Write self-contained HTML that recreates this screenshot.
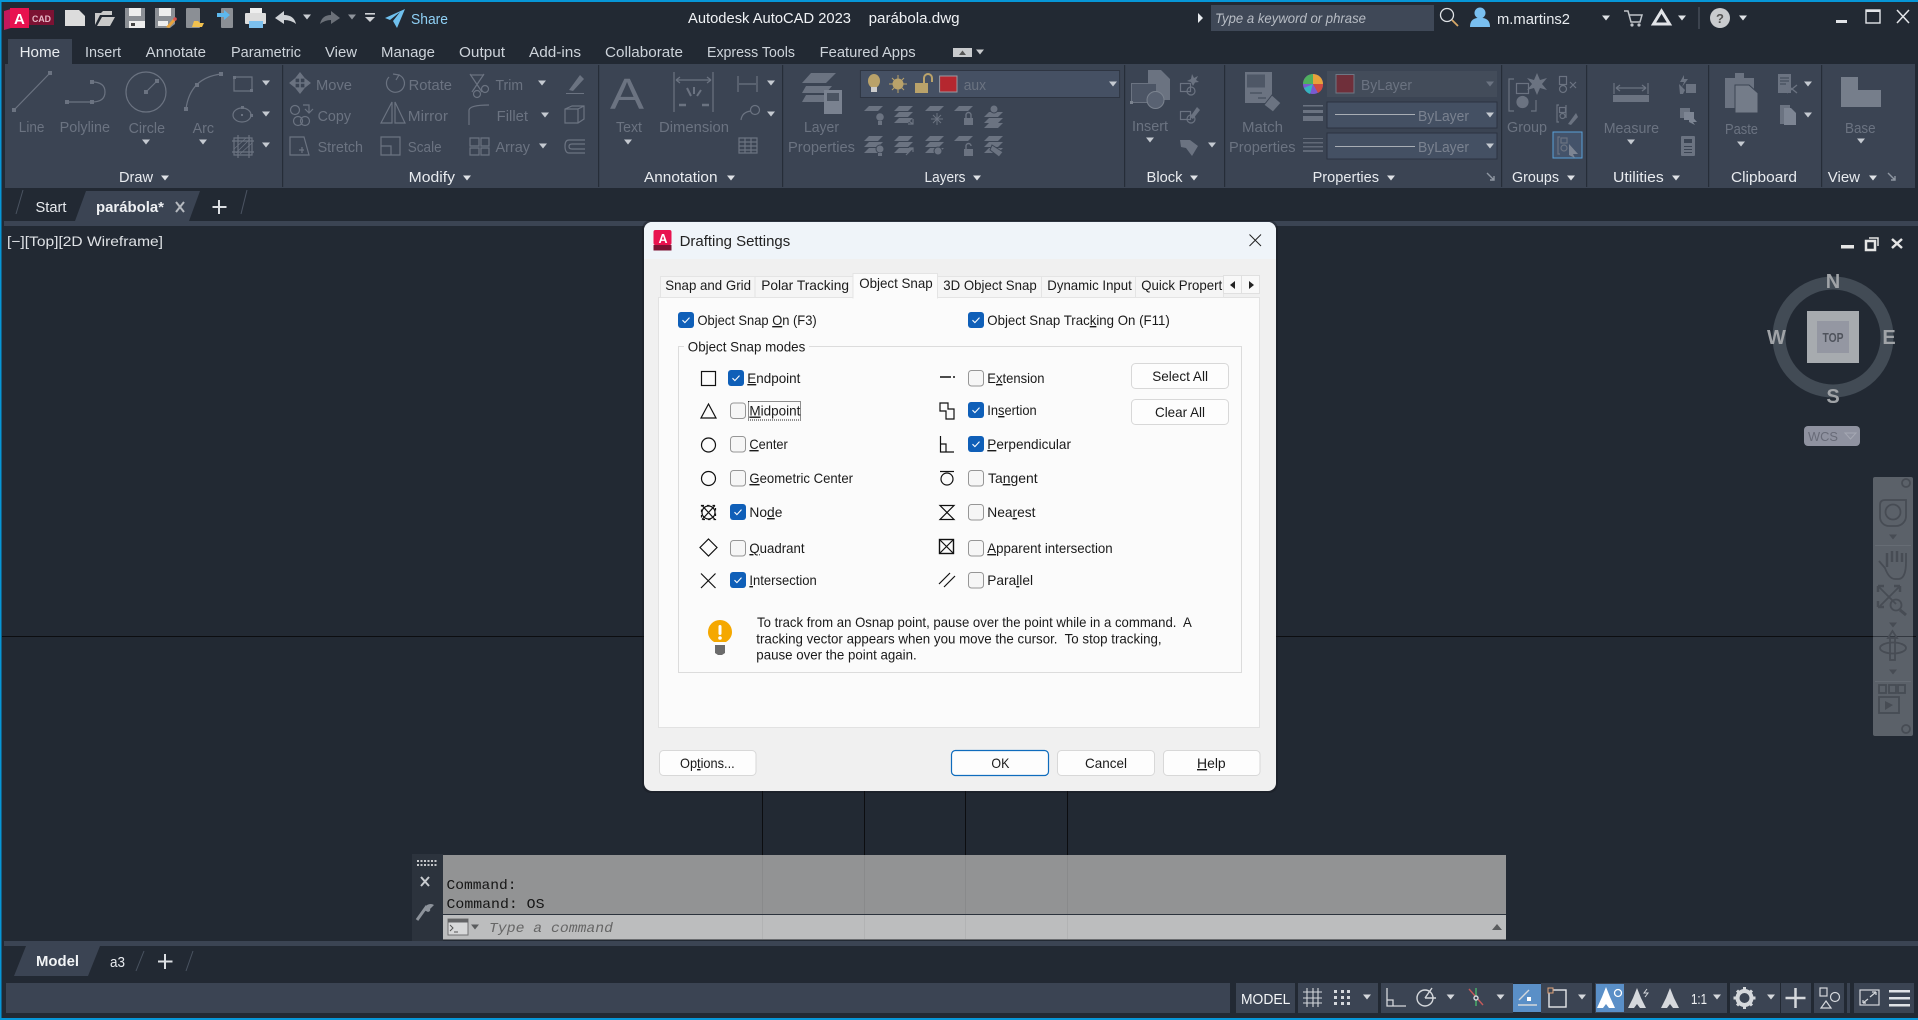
<!DOCTYPE html>
<html lang="en"><head><meta charset="utf-8"><title>Autodesk AutoCAD 2023</title>
<style>
html,body{margin:0;padding:0;background:#222933;overflow:hidden}
svg{display:block;position:absolute;left:0;top:0}
text{font-family:"Liberation Sans",sans-serif;font-size:14.5px;white-space:pre}
.w{fill:#e8ebef}.t{fill:#cdd3da}.d{fill:#6b7381}.k{fill:#1a1a1a;font-size:14px}
.m{font-family:"Liberation Mono",monospace;fill:#151515;font-size:14px}
.u{text-decoration:underline}
.i{fill:none;stroke:#6b7381;stroke-width:1.2}
.f{fill:#6b7381}
.c{fill:none;stroke:#111;stroke-width:1.2}
.s{fill:none;stroke:#d5d8dc;stroke-width:1.4}
</style></head><body>
<svg width="1918" height="1020" viewBox="0 0 1918 1020" xmlns="http://www.w3.org/2000/svg">
<defs>
<path id="dd" d="M-4-2.5H4L0 2.5Z"/>
<path id="lp" d="M5 0H19L14 5H0Z"/>
<g id="on"><rect width="16" height="16" rx="3" fill="#0f5fb8"/><path d="M4.5 8.2l2.4 2.4 4.6-5" fill="none" stroke="#fff" stroke-width="1.1"/></g>
<rect id="off" x=".5" y=".5" width="15" height="15.500" rx="3" fill="#f6f6f6" stroke="#969696"/>
</defs>

<rect width="1918" height="1020" fill="#222933"/>
<rect width="1918" height="2" fill="#0696d7"/><rect y="1018" width="1918" height="2" fill="#0696d7"/><rect width="1.500" height="1020" fill="#0696d7"/>

<!-- QAT -->
<path d="M4 11L11 9V28L4 30Z" fill="#c2185b"/><rect x="10" y="8" width="19" height="20" fill="#e8124f"/>
<rect x="29" y="10" width="25" height="15" fill="#7c1233"/>
<text x="14" y="24" style="font-size:15px;font-weight:bold" fill="#fff">A</text>
<text x="32" y="22" style="font-size:9.500px;font-weight:bold" fill="#e6b8c6" textLength="19" lengthAdjust="spacingAndGlyphs">CAD</text>
<path d="M65 10H79L85 16V26H65Z" fill="#dcdcdc"/>
<path d="M95 25V13H101L103 11H112V15H100L95 25ZM97 26L102 17H115L110 26Z" fill="#c9c9c9"/>
<path d="M125 8H145V28H125Z" fill="#8b8f95"/><rect x="129" y="8" width="12" height="8" fill="#eee"/><rect x="129" y="21" width="16" height="7" fill="#eee"/><rect x="131" y="23" width="4" height="3" fill="#444"/>
<path d="M155 8H175V24L170 28H155Z" fill="#8b8f95"/><rect x="159" y="8" width="12" height="8" fill="#eee"/><rect x="158" y="21" width="10" height="5" fill="#eee"/><path d="M166 27L174 18L176 20L169 28Z" fill="#e8a33d"/><circle cx="175" cy="19" r="1.800" fill="#d9534f"/>
<rect x="186" y="8" width="14" height="20" rx="1" fill="#8b8f95"/><path d="M194 21H198L200 23H204L202 27H192Z" fill="#f2c14e"/>
<rect x="221" y="8" width="12" height="20" rx="1" fill="#8b8f95"/><path d="M217 13H224V10L230 15L224 20V17H217Z" fill="#5db8ee"/>
<path d="M250 8H262V14H250Z" fill="#eee"/><rect x="245" y="13" width="21" height="11" rx="1" fill="#dcdcdc"/><rect x="249" y="21" width="14" height="7" fill="#7cc0ee"/>
<path d="M275 18L284 11V15Q294 15 296 24Q291 20 284 20V24Z" fill="#cfd2d6"/>
<use href="#dd" x="307" y="17" fill="#c9cdd2"/>
<path d="M340 18L331 11V15Q322 15 320 24Q325 20 331 20V24Z" fill="#6b7078"/>
<use href="#dd" x="352" y="17" fill="#8e939b"/>
<rect x="365" y="13" width="10" height="1.600" fill="#cfd2d6"/><path d="M365 17H375L370 22Z" fill="#cfd2d6"/>
<path d="M385 18L405 9L397 28L393 21L400 12L390 20Z" fill="#6fc0ee"/>
<text x="411" y="24" fill="#8fd0f5" textLength="37" lengthAdjust="spacingAndGlyphs">Share</text>

<!-- title -->
<text x="688" y="23" style="fill:#f0f2f5" textLength="163" lengthAdjust="spacingAndGlyphs">Autodesk AutoCAD 2023</text>
<text x="868.600" y="23" style="fill:#f0f2f5" textLength="91" lengthAdjust="spacingAndGlyphs">parábola.dwg</text>
<path d="M1198 13L1203 18L1198 23Z" fill="#e8ebef"/>
<rect x="1211" y="5" width="223" height="26" fill="#3f4857"/>
<text x="1215" y="23" style="font-style:italic;font-size:14px" fill="#b8bdc5" textLength="151" lengthAdjust="spacingAndGlyphs">Type a keyword or phrase</text>
<circle cx="1447" cy="15" r="6.500" fill="none" stroke="#dfe2e6" stroke-width="1.300"/><path d="M1452 20L1458 26" stroke="#d8a868" stroke-width="1.800"/>
<circle cx="1480" cy="13" r="5.500" fill="#79bff0"/><path d="M1470 27Q1470 19 1477 18H1483Q1490 19 1490 27Z" fill="#79bff0"/>
<text x="1497" y="24" class="w" textLength="73" lengthAdjust="spacingAndGlyphs">m.martins2</text>
<use href="#dd" x="1606" y="18" fill="#dfe2e6"/>
<path d="M1624 11H1628L1631 22H1640L1642 15H1629" fill="none" stroke="#bfc3c8" stroke-width="1.500"/><circle cx="1632" cy="25" r="1.600" fill="#bfc3c8"/><circle cx="1639" cy="25" r="1.600" fill="#bfc3c8"/>
<path d="M1661.500 11L1653.500 24H1669.500Z" fill="none" stroke="#e2e4e8" stroke-width="3"/>
<use href="#dd" x="1682" y="18" fill="#dfe2e6"/>
<rect x="1698.500" y="7" width="1" height="22" fill="#555d69"/>
<circle cx="1720" cy="18" r="10" fill="#c9cbce"/><text x="1716" y="23" style="font-size:13px;font-weight:bold" fill="#555">?</text>
<use href="#dd" x="1743" y="18" fill="#dfe2e6"/>
<rect x="1836" y="20" width="11" height="3" fill="#e2e4e8"/>
<rect x="1866" y="10" width="14" height="13" fill="none" stroke="#e2e4e8" stroke-width="1.400"/><rect x="1865.500" y="9.500" width="15" height="2.500" fill="#e2e4e8"/>
<path d="M1897 10L1909 23M1909 10L1897 23" stroke="#e2e4e8" stroke-width="1.500"/>

<!-- ribbon tabs -->
<rect x="8" y="39" width="64" height="25" fill="#3b4453"/>
<text x="19.600" y="57" class="w" textLength="40.500" lengthAdjust="spacingAndGlyphs">Home</text>
<text x="85" y="57" class="t" textLength="36" lengthAdjust="spacingAndGlyphs">Insert</text>
<text x="145.700" y="57" class="t" textLength="60.300" lengthAdjust="spacingAndGlyphs">Annotate</text>
<text x="231" y="57" class="t" textLength="70" lengthAdjust="spacingAndGlyphs">Parametric</text>
<text x="325" y="57" class="t" textLength="32" lengthAdjust="spacingAndGlyphs">View</text>
<text x="381" y="57" class="t" textLength="54" lengthAdjust="spacingAndGlyphs">Manage</text>
<text x="459" y="57" class="t" textLength="46" lengthAdjust="spacingAndGlyphs">Output</text>
<text x="529" y="57" class="t" textLength="52" lengthAdjust="spacingAndGlyphs">Add-ins</text>
<text x="605" y="57" class="t" textLength="78" lengthAdjust="spacingAndGlyphs">Collaborate</text>
<text x="707" y="57" class="t" textLength="88" lengthAdjust="spacingAndGlyphs">Express Tools</text>
<text x="819.600" y="57" class="t" textLength="96" lengthAdjust="spacingAndGlyphs">Featured Apps</text>
<rect x="953" y="48" width="19" height="9" fill="#c8cacd"/><path d="M959 55H966L962.500 50.500Z" fill="#555"/>
<use href="#dd" x="980" y="52" fill="#c8cacd"/>

<!-- ribbon panel -->
<rect x="5" y="64" width="1910" height="124" fill="#3b4453"/>
<g fill="#262d38">
<rect x="282" y="65" width="1.200" height="122"/><rect x="598" y="65" width="1.200" height="122"/><rect x="782" y="65" width="1.200" height="122"/><rect x="1124" y="65" width="1.200" height="122"/><rect x="1224" y="65" width="1.200" height="122"/><rect x="1501" y="65" width="1.200" height="122"/><rect x="1586" y="65" width="1.200" height="122"/><rect x="1708" y="65" width="1.200" height="122"/><rect x="1821" y="65" width="1.200" height="122"/>
</g>

<!-- panel titles -->
<text x="119" y="182" class="w" textLength="34" lengthAdjust="spacingAndGlyphs">Draw</text><use href="#dd" x="165" y="178" fill="#dfe2e6"/>
<text x="408.600" y="182" class="w" textLength="46.400" lengthAdjust="spacingAndGlyphs">Modify</text><use href="#dd" x="467" y="178" fill="#dfe2e6"/>
<text x="644" y="182" class="w" textLength="73.500" lengthAdjust="spacingAndGlyphs">Annotation</text><use href="#dd" x="731" y="178" fill="#dfe2e6"/>
<text x="924.500" y="182" class="w" textLength="41" lengthAdjust="spacingAndGlyphs">Layers</text><use href="#dd" x="977" y="178" fill="#dfe2e6"/>
<text x="1146.500" y="182" class="w" textLength="36" lengthAdjust="spacingAndGlyphs">Block</text><use href="#dd" x="1194" y="178" fill="#dfe2e6"/>
<text x="1312.600" y="182" class="w" textLength="66.400" lengthAdjust="spacingAndGlyphs">Properties</text><use href="#dd" x="1391" y="178" fill="#dfe2e6"/>
<text x="1512" y="182" class="w" textLength="47" lengthAdjust="spacingAndGlyphs">Groups</text><use href="#dd" x="1571" y="178" fill="#dfe2e6"/>
<text x="1613" y="182" class="w" textLength="50.700" lengthAdjust="spacingAndGlyphs">Utilities</text><use href="#dd" x="1676" y="178" fill="#dfe2e6"/>
<text x="1731" y="182" class="w" textLength="66" lengthAdjust="spacingAndGlyphs">Clipboard</text>
<text x="1827.800" y="182" class="w" textLength="32.200" lengthAdjust="spacingAndGlyphs">View</text><use href="#dd" x="1873" y="178" fill="#dfe2e6"/>
<path d="M1487 173L1494 180M1494 176V180H1490" fill="none" stroke="#8f97a2" stroke-width="1.400"/>
<path d="M1888 173L1895 180M1895 176V180H1891" fill="none" stroke="#8f97a2" stroke-width="1.400"/>

<!-- ribbon tool labels -->
<text x="18.800" y="132" class="d" textLength="25.700" lengthAdjust="spacingAndGlyphs">Line</text>
<text x="59.600" y="132" class="d" textLength="50.400" lengthAdjust="spacingAndGlyphs">Polyline</text>
<text x="128.600" y="133" class="d" textLength="36.400" lengthAdjust="spacingAndGlyphs">Circle</text>
<text x="192.600" y="133" class="d" textLength="21.400" lengthAdjust="spacingAndGlyphs">Arc</text>
<text x="316" y="90" class="d" textLength="36" lengthAdjust="spacingAndGlyphs">Move</text>
<text x="408.600" y="90" class="d" textLength="43.400" lengthAdjust="spacingAndGlyphs">Rotate</text>
<text x="495.500" y="90" class="d" textLength="27.500" lengthAdjust="spacingAndGlyphs">Trim</text>
<text x="317.600" y="121" class="d" textLength="33.400" lengthAdjust="spacingAndGlyphs">Copy</text>
<text x="407.800" y="121" class="d" textLength="40.200" lengthAdjust="spacingAndGlyphs">Mirror</text>
<text x="496.700" y="121" class="d" textLength="31.300" lengthAdjust="spacingAndGlyphs">Fillet</text>
<text x="317.600" y="152" class="d" textLength="45.400" lengthAdjust="spacingAndGlyphs">Stretch</text>
<text x="407.800" y="152" class="d" textLength="33.800" lengthAdjust="spacingAndGlyphs">Scale</text>
<text x="495.500" y="152" class="d" textLength="34.500" lengthAdjust="spacingAndGlyphs">Array</text>
<text x="616" y="132" class="d" textLength="26" lengthAdjust="spacingAndGlyphs">Text</text>
<text x="659" y="132" class="d" textLength="70" lengthAdjust="spacingAndGlyphs">Dimension</text>
<text x="804" y="132" class="d" textLength="35" lengthAdjust="spacingAndGlyphs">Layer</text>
<text x="788" y="152" class="d" textLength="67" lengthAdjust="spacingAndGlyphs">Properties</text>
<text x="1132" y="131" class="d" textLength="36" lengthAdjust="spacingAndGlyphs">Insert</text>
<text x="1242" y="132" class="d" textLength="41" lengthAdjust="spacingAndGlyphs">Match</text>
<text x="1229" y="152" class="d" textLength="66.500" lengthAdjust="spacingAndGlyphs">Properties</text>
<text x="1507" y="132" class="d" textLength="40" lengthAdjust="spacingAndGlyphs">Group</text>
<text x="1603.700" y="133" class="d" textLength="55.300" lengthAdjust="spacingAndGlyphs">Measure</text>
<text x="1725" y="134" class="d" textLength="33" lengthAdjust="spacingAndGlyphs">Paste</text>
<text x="1845" y="133" class="d" textLength="30.600" lengthAdjust="spacingAndGlyphs">Base</text>

<!-- Draw icons -->
<g class="i">
<path d="M14 110L50 73"/><path d="M67 102H92Q105 102 105 92Q105 82 92 82"/>
<circle cx="146" cy="92" r="20"/><path d="M146 92L157 81"/>
<path d="M186 109Q190 78 221 74"/>
<path d="M234 77H252V91H234Z"/><ellipse cx="242" cy="115" rx="9" ry="7"/>
<path d="M234 138H252V155H234ZM238 135V158M249 135V158M232 141H254M232 152H254"/>
<path d="M236 153L250 139M240 154L252 143M234 149L246 138" stroke-width=".8"/>
</g>
<g class="f">
<rect x="48" y="71" width="4" height="4"/><rect x="12" y="108" width="4" height="4"/><rect x="65" y="100" width="4" height="4"/><rect x="90" y="100" width="4" height="4"/><rect x="90" y="80" width="4" height="4"/>
<rect x="144" y="90" width="4" height="4"/><rect x="155" y="79" width="4" height="4"/><rect x="184" y="107" width="4" height="4"/><rect x="195" y="83" width="4" height="4"/><rect x="219" y="72" width="4" height="4"/>
<rect x="233" y="76" width="3" height="3"/><rect x="250" y="89" width="3" height="3"/><rect x="241" y="106" width="3" height="3"/><rect x="241" y="114" width="2" height="2"/><rect x="250" y="114" width="3" height="3"/>
</g>
<g fill="#c5cad1">
<use href="#dd" x="146" y="142"/><use href="#dd" x="203" y="142"/><use href="#dd" x="266" y="83"/><use href="#dd" x="266" y="114"/><use href="#dd" x="266" y="145"/>
<use href="#dd" x="542" y="83"/><use href="#dd" x="545" y="115"/><use href="#dd" x="543" y="146"/>
<use href="#dd" x="628" y="142"/><use href="#dd" x="771" y="83"/><use href="#dd" x="771" y="114"/>
<use href="#dd" x="1150" y="140"/><use href="#dd" x="1212" y="145"/><use href="#dd" x="1631" y="142"/><use href="#dd" x="1741" y="144"/><use href="#dd" x="1861" y="141"/><use href="#dd" x="1808" y="84"/><use href="#dd" x="1808" y="115"/>
</g>

<!-- Modify icons -->
<g class="i">
<path d="M300 76V90M292 83H308" stroke-width="1.600"/>
<path d="M296 78L300 73L304 78ZM296 88L300 93L304 88ZM295 79L290 83L295 87ZM305 79L310 83L305 87Z" fill="#6b7381"/>
<circle cx="295" cy="110" r="4.500"/><path d="M303 105H309V112M305 109L309 113L313 109"/><circle cx="298" cy="121" r="4.500"/><circle cx="305" cy="121" r="4.500"/>
<path d="M290 137H304L309 155H290ZM299 150H304M302 147V153"/>
<path d="M389 77A9 9 0 1 0 399 75M393 74L399 75L396 80"/>
<path d="M381 123L392 102V123ZM395 102L405 123H395Z"/>
<path d="M381 137H400V155H381ZM381 146H391V155"/>
<path d="M470 74L482 92M484 74L472 92"/><circle cx="477" cy="94" r="3.500"/><circle cx="485" cy="89" r="3.500"/><path d="M470 75H484"/>
<path d="M469 125V110Q470 105 489 105"/>
<path d="M470 138H479V146H470ZM481 138H489V146H481ZM470 148H479V155H470ZM481 148H489V155H481Z"/>
<path d="M565 109L572 106H584V119L578 123H565ZM565 109H578V123M578 109L584 106"/>
<path d="M585 140H569Q565 140 565 146Q565 153 569 153H585M585 144H572Q569 144 569 146.500Q569 149 572 149H585"/>
</g>
<path d="M569 90L580 75L584 79L573 91Z" fill="#6b7381"/><rect x="566" y="93" width="18" height="1" fill="#6b7381"/>

<!-- Annotation icons -->
<text x="610" y="109" style="font-size:44px" fill="#6b7381" textLength="34" lengthAdjust="spacingAndGlyphs">A</text>
<g class="i">
<path d="M674 72V112M713 72V112M676 80H711M676 80L680 77M676 80L680 83M711 80L707 77M711 80L707 83"/>
<path d="M691 96L687 88M694 94V87M697 96L701 90" stroke-width="2"/><path d="M679 105H686M702 105H709" stroke-width="2.500"/>
<path d="M738 76V92M757 76V92M739 84H756"/>
<circle cx="755" cy="110" r="4.500"/><path d="M751 111Q742 112 741 120"/>
<path d="M739 138H757V153H739ZM739 142H757M739 146H757M739 150H757M745 138V153M751 138V153"/>
</g>

<!-- Layers -->
<g class="f">
<path d="M811 73H836L826 83H802ZM806 86H832L826 93H802ZM806 95H824V102H802Z"/>
<rect x="824" y="90" width="18" height="24" fill="#7a8290"/><rect x="827" y="93" width="12" height="8" fill="#4b5462"/>
</g>
<rect x="860.400" y="70.500" width="259.200" height="27" fill="#455063" stroke="#2e3542"/>
<ellipse cx="874" cy="81" rx="6" ry="7" fill="#b9a26a"/><rect x="871" y="87" width="6" height="5" fill="#ccc"/>
<circle cx="898" cy="84" r="5.500" fill="#b9a26a"/><path d="M898 75V93M889 84H907M892 78L904 90M904 78L892 90" stroke="#b9a26a"/>
<rect x="915" y="83" width="13" height="10" fill="#b9a26a"/><path d="M924 83V78A4 4 0 0 1 932 78V82" fill="none" stroke="#b9a26a" stroke-width="2"/>
<rect x="939.600" y="76" width="17.400" height="16" fill="#b5272f" stroke="#9a9aa0"/>
<use href="#dd" x="1113" y="84" fill="#c5cad1"/>
<text x="963.700" y="90" class="d" textLength="22.300" lengthAdjust="spacingAndGlyphs">aux</text>
<g class="f">
<use href="#lp" x="864" y="106"/><circle cx="880" cy="117" r="3.800"/><rect x="878" y="121" width="4" height="4"/>
<use href="#lp" x="894" y="106"/><use href="#lp" x="894" y="112"/><use href="#lp" x="894" y="118"/>
<use href="#lp" x="925" y="106"/><path d="M937 113V125M931 119H943M933 115L941 123M941 115L933 123" stroke="#6b7381" fill="none"/>
<use href="#lp" x="954" y="106"/><rect x="964" y="118" width="9" height="7"/><path d="M966 118V115A2.500 2.500 0 0 1 971 115V118" fill="none" stroke="#6b7381" stroke-width="1.400"/>
<use href="#lp" x="984" y="112"/><use href="#lp" x="984" y="118"/><use href="#lp" x="984" y="124" transform="translate(0 -1)"/><circle cx="994" cy="109" r="4" stroke="#3b4453"/>
<use href="#lp" x="864" y="136"/><use href="#lp" x="864" y="142"/><use href="#lp" x="864" y="148"/><circle cx="880" cy="149" r="4" stroke="#3b4453"/><rect x="878" y="153" width="4" height="3"/>
<use href="#lp" x="894" y="136"/><use href="#lp" x="894" y="142"/><use href="#lp" x="894" y="148"/>
<use href="#lp" x="925" y="136"/><use href="#lp" x="925" y="142"/><use href="#lp" x="925" y="148"/><circle cx="938" cy="151" r="4" stroke="#3b4453"/>
<use href="#lp" x="954" y="136"/><rect x="964" y="149" width="9" height="7"/><path d="M966 149V146A2.500 2.500 0 0 1 971 146" fill="none" stroke="#6b7381" stroke-width="1.400"/>
<use href="#lp" x="984" y="136"/><use href="#lp" x="984" y="142"/><use href="#lp" x="984" y="148"/><path d="M992 145L1003 152L999 157L990 150Z" stroke="#3b4453"/>
</g>
<path d="M906 119L913 124M913 119V124H908M906 155L913 148M913 152V148H909" fill="none" stroke="#6b7381" stroke-width="1.200"/>

<!-- Block -->
<path d="M1148 70H1161L1170 79V100H1148Z" fill="#6b7381"/>
<rect x="1131.500" y="83.500" width="25" height="19" fill="#4c5565" stroke="#6b7381"/>
<circle cx="1155.500" cy="100" r="8.500" fill="#596272" stroke="#7b838f"/>
<rect x="1130" y="101" width="3" height="3" fill="#7b838f"/>
<g class="i"><rect x="1180.500" y="83.500" width="10" height="8"/><circle cx="1191" cy="91" r="4"/><rect x="1180.500" y="111.500" width="10" height="8"/><circle cx="1191" cy="119" r="4"/></g>
<path d="M1192 74L1194 78L1198 76L1196 80L1199 82L1195 82.500L1193 86L1191 82L1187 81L1191 79Z" fill="#6b7381"/>
<path d="M1190 117L1197 107L1200 110L1193 119Z" fill="#6b7381"/>
<path d="M1180 140H1190L1198 146L1192 156L1186 148L1181 147Z" fill="#6b7381"/>
<path d="M1245 72H1272V103H1245Z" fill="#6b7381"/><rect x="1247.500" y="75" width="17" height="12" fill="#4e5766" stroke="#4e5766"/>
<path d="M1250 93H1262M1258 98H1266" stroke="#3b4453"/>
<path d="M1264 105L1272 95L1281 103L1273 112Z" fill="#6b7381" stroke="#3b4453"/>

<!-- Properties -->
<circle cx="1313" cy="84" r="10" fill="#7a5bd0"/>
<path d="M1313 84L1313 74A10 10 0 0 1 1323 84Z" fill="#e8a23a"/><path d="M1313 84L1323 84A10 10 0 0 1 1318 93Z" fill="#cf4a43"/><path d="M1313 84L1304 88A10 10 0 0 0 1310 94Z" fill="#36b3c0"/><path d="M1313 84L1313 74A10 10 0 0 0 1303 84Z" fill="#4fb05e"/>
<rect x="1327" y="71" width="170" height="26" fill="#434c5a"/><rect x="1336" y="74.500" width="18" height="18.500" fill="#6f2f3a" stroke="#6f7784"/>
<use href="#dd" x="1490" y="84" fill="#6b7381"/>
<rect x="1327" y="102" width="170" height="26" fill="#445063" stroke="#2b3240"/><rect x="1327" y="133" width="170" height="26" fill="#445063" stroke="#2b3240"/>
<rect x="1335" y="114" width="80" height="1" fill="#a9aeb5"/><rect x="1335" y="146" width="80" height="1" fill="#a9aeb5"/>
<use href="#dd" x="1490" y="115" fill="#c5cad1"/><use href="#dd" x="1490" y="146" fill="#c5cad1"/>
<text x="1361" y="90" class="d" textLength="51" lengthAdjust="spacingAndGlyphs">ByLayer</text>
<text x="1418" y="121" class="d" textLength="51" style="fill:#7a8290" lengthAdjust="spacingAndGlyphs">ByLayer</text>
<text x="1418" y="152" class="d" textLength="51" style="fill:#7a8290" lengthAdjust="spacingAndGlyphs">ByLayer</text>
<g class="f"><rect x="1303" y="105" width="20" height="1.500"/><rect x="1303" y="110" width="20" height="3"/><rect x="1303" y="116" width="20" height="5"/>
<rect x="1303" y="138" width="20" height="1" opacity=".8"/><rect x="1303" y="142" width="20" height="1.500" opacity=".8"/><rect x="1303" y="146" width="20" height="1.500" opacity=".8"/><rect x="1303" y="150" width="20" height="2" opacity=".8"/></g>

<!-- Groups -->
<g class="i"><path d="M1514 79H1509V111H1514M1536 100V111H1531"/><rect x="1516.500" y="83.500" width="12" height="10"/><circle cx="1522.500" cy="102" r="5.500" class="f"/>
<rect x="1559.500" y="76.500" width="7" height="8"/><circle cx="1563" cy="89" r="3.500"/><path d="M1570 82L1576 88M1576 82L1570 88"/>
<path d="M1559 105H1557V122H1559M1566 105V118"/><rect x="1559.500" y="107.500" width="6" height="5"/><circle cx="1562.500" cy="116" r="2.500"/></g>
<path d="M1537 73L1540 80L1547 78L1542 84L1547 90L1540 88L1537 95L1534 88L1527 90L1532 84L1527 78L1534 80Z" fill="#6b7381"/>
<path d="M1568 124L1576 113L1578 117L1571 125Z" fill="#6b7381"/>
<rect x="1553" y="132" width="29" height="26" fill="#44536a" stroke="#58a0d8"/>
<g class="i"><path d="M1560 137H1558V154H1560"/><rect x="1561" y="138" width="6" height="5"/><circle cx="1564" cy="148" r="3"/></g>
<path d="M1569 144L1578 154H1573L1575 158L1569 155Z" fill="#7d8593"/>

<!-- Utilities -->
<g class="i"><path d="M1614 83V94M1648 83V94M1616 88H1646M1616 88L1620 85M1616 88L1620 91M1646 88L1642 85M1646 88L1642 91"/></g>
<rect x="1613" y="95" width="36" height="7" fill="#6b7381"/>
<g class="f"><path d="M1684 75L1680 82H1684L1682 87L1688 79H1684Z"/><path d="M1679 84L1685 90L1683 94L1680 94Z"/><rect x="1686" y="84" width="10" height="9"/>
<rect x="1680" y="108" width="10" height="10"/><rect x="1684" y="112" width="10" height="8" fill="#7d8593"/><path d="M1689 113L1697 122H1693L1695 125L1689 122Z" fill="#7d8593"/>
<rect x="1681" y="136" width="14" height="20" rx="1"/><rect x="1684" y="139" width="8" height="4" fill="#3b4453"/><rect x="1684" y="146" width="8" height="1" fill="#3b4453"/><rect x="1684" y="149" width="8" height="1" fill="#3b4453"/><rect x="1684" y="152" width="8" height="1" fill="#3b4453"/>
<path d="M1725 78H1735V73H1744V78H1754V89H1745V108H1725Z"/><path d="M1735 85H1749L1758 93V113H1735Z" fill="#747c89" stroke="#3b4453"/>
<rect x="1778" y="74" width="13" height="19"/>
<path d="M1780 105H1790V124H1780Z"/><path d="M1784 108H1791L1796 113V125H1784Z" fill="#7d8593"/>
<path d="M1841 77H1858V90H1881V107H1841Z" fill="#767e8b"/>
</g>
<path d="M1780 78H1789M1780 81H1789M1780 84H1786" stroke="#3b4453"/>
<path d="M1787 85L1797 93M1797 85L1787 93" stroke="#6b7381" stroke-width="1.400"/>

<!-- tabs strip -->
<path d="M16 214L23 190" stroke="#4a5361" fill="none"/>
<path d="M75 221L86 191H200L189 221Z" fill="#3b4453"/>
<text x="35.500" y="212" style="fill:#e8ebef" textLength="31" lengthAdjust="spacingAndGlyphs">Start</text>
<text x="96" y="212" style="font-weight:bold;font-size:14.500px" fill="#eef0f3" textLength="68" lengthAdjust="spacingAndGlyphs">parábola*</text>
<path d="M176 202L184 212M184 202L176 212" stroke="#b5b9bf" stroke-width="2"/>
<path d="M212.500 207H226.500M219 200V214" stroke="#dcdfe3" stroke-width="2"/>
<path d="M241 214L247 190" stroke="#4a5361"/>
<rect x="4" y="221" width="1914" height="5" fill="#3b4453"/>

<!-- canvas -->
<text x="7" y="246" fill="#dfe2e6" style="font-size:14px" textLength="156" lengthAdjust="spacingAndGlyphs">[−][Top][2D Wireframe]</text>
<rect x="2" y="636" width="1914" height="1" fill="#0c0d10"/>
<g fill="#0c0d10"><rect x="762" y="790" width="1" height="66"/><rect x="864" y="790" width="1" height="66"/><rect x="965" y="790" width="1" height="66"/><rect x="1067" y="790" width="1" height="66"/></g>

<rect x="1841" y="245" width="13" height="3.500" fill="#e5e5e5"/>
<rect x="1866" y="241" width="9" height="9" fill="none" stroke="#e5e5e5" stroke-width="2.500"/><path d="M1869 238H1878V246" fill="none" stroke="#e5e5e5" stroke-width="1.500"/>
<path d="M1892 239L1902 248M1902 239L1892 248" stroke="#e5e5e5" stroke-width="2.500"/>

<!-- ViewCube -->
<circle cx="1833" cy="337" r="54" fill="none" stroke="#424b55" stroke-width="13"/>
<rect x="1807" y="311" width="52" height="52" fill="#a7abaf"/>
<rect x="1817" y="321" width="32" height="32" fill="#9497a2"/>
<text x="1833" y="342" text-anchor="middle" style="font-size:13px;font-weight:bold" fill="#4f535c" textLength="21" lengthAdjust="spacingAndGlyphs">TOP</text>
<g fill="#a0a3a7">
<text x="1833" y="288" text-anchor="middle" style="font-size:20px;font-weight:bold">N</text>
<text x="1833" y="403" text-anchor="middle" style="font-size:20px;font-weight:bold">S</text>
<text x="1776.500" y="344" text-anchor="middle" style="font-size:20px;font-weight:bold">W</text>
<text x="1889" y="344" text-anchor="middle" style="font-size:20px;font-weight:bold">E</text>
</g>
<rect x="1804" y="426" width="56" height="20" rx="4" fill="#8f92a0"/>
<text x="1808" y="441" style="font-size:13px" fill="#686b78" textLength="30" lengthAdjust="spacingAndGlyphs">WCS</text>
<path d="M1845 433H1856L1850.500 439Z" fill="none" stroke="#a5a8b3"/>

<!-- Nav bar -->
<rect x="1873" y="477" width="40" height="259" rx="2" fill="#5b6169"/>
<rect x="1873" y="636" width="40" height="1" fill="#333840"/>
<rect x="1875" y="545" width="36" height="1" fill="#666c74"/><rect x="1875" y="681" width="36" height="1" fill="#666c74"/>
<g fill="none" stroke="#474c54" stroke-width="1.800">
<circle cx="1906" cy="483" r="4"/><circle cx="1906" cy="729" r="4"/>
<path d="M1885 500H1906V516A10 10 0 0 1 1896 526H1889A9 9 0 0 1 1880 517V505Q1880 500 1885 500Z"/><circle cx="1893" cy="512" r="7.500"/>
<path d="M1879 561L1885 568Q1889 579 1895 579H1899Q1906 578 1906 562V553"/>
<path d="M1887 567V553M1892 562V551M1897 562V551M1902 562V553" stroke-width="2.400"/>
<path d="M1879 587L1896 604M1899 587L1880 606"/><path d="M1878 586L1884 586M1878 586V592M1900 586H1894M1900 586V592M1878 607H1884M1878 607V601" stroke-width="2.400"/>
<circle cx="1896" cy="605" r="5.500"/><path d="M1900 610L1906 615" stroke-width="3"/>
<path d="M1890 638V660H1895V638M1892.500 631L1888 638H1897Z"/><ellipse cx="1893" cy="648" rx="13" ry="5.500"/>
<rect x="1879" y="685" width="7" height="8"/><rect x="1889" y="685" width="7" height="8"/><rect x="1898" y="685" width="7" height="8"/>
<rect x="1879" y="697" width="20" height="16"/>
</g>
<path d="M1885 701L1893 705L1885 710Z" fill="#474c54"/>
<g fill="#474c54"><use href="#dd" x="1893" y="537"/><use href="#dd" x="1893" y="625"/><use href="#dd" x="1893" y="672"/></g>

<!-- Command line -->
<rect x="412" y="854" width="31" height="87" fill="#2c333d"/>
<path d="M417 861H438M417 865H438" stroke="#c5c7ca" stroke-width="2" stroke-dasharray="2 1.500"/>
<path d="M421 877L429 886M429 877L421 886" stroke="#c9ccd0" stroke-width="2"/>
<path d="M417 920L427 906" stroke="#8d939b" stroke-width="3"/><path d="M424 910L427 905Q431 903 434 905L430 909Q431 911 428 912Z" fill="#8d939b"/>
<rect x="443" y="855" width="1063" height="59" fill="#929394"/>
<rect x="443" y="914" width="1063" height="1" fill="#2c333d"/>
<rect x="443" y="915" width="1063" height="25" fill="#bcbdbe"/>
<rect x="443" y="939" width="1063" height="1" fill="#6b6d70"/>
<g fill="#898a8b"><rect x="762" y="855" width="1" height="59"/><rect x="864" y="855" width="1" height="59"/><rect x="965" y="855" width="1" height="59"/><rect x="1067" y="855" width="1" height="59"/></g>
<g fill="#b2b3b4"><rect x="762" y="915" width="1" height="24"/><rect x="864" y="915" width="1" height="24"/><rect x="965" y="915" width="1" height="24"/><rect x="1067" y="915" width="1" height="24"/></g>
<text x="446.500" y="889" class="m" textLength="70" lengthAdjust="spacingAndGlyphs">Command:</text>
<text x="446.500" y="908" class="m" textLength="98" lengthAdjust="spacingAndGlyphs">Command: OS</text>
<rect x="448" y="919" width="20" height="16" fill="#d7d8d9" stroke="#707172"/><rect x="448" y="919" width="20" height="3.500" fill="#636466"/>
<path d="M450 925L453 928L450 931M454 932H458" fill="none" stroke="#555"/>
<use href="#dd" x="475" y="927" fill="#5a5c5e"/>
<text x="489" y="932" class="m" style="font-style:italic;fill:#666" textLength="124" lengthAdjust="spacingAndGlyphs">Type a command</text>
<path d="M1492 930H1502L1497 924Z" fill="#5a5c5e"/>

<!-- Layout tabs -->
<rect x="4" y="941" width="1914" height="5" fill="#3b4453"/>
<path d="M14 976L26 946H100L88 976Z" fill="#3b4453"/>
<text x="36" y="966" style="font-weight:bold" fill="#f2f4f6" textLength="43" lengthAdjust="spacingAndGlyphs">Model</text>
<text x="110" y="967" fill="#e8ebef" textLength="15" lengthAdjust="spacingAndGlyphs">a3</text>
<path d="M136 971L144 951" stroke="#4a5361"/>
<path d="M158 961.500H172.500M165 954V969" stroke="#dcdfe3" stroke-width="2"/>
<path d="M186 971L193 951" stroke="#4a5361"/>

<!-- Status bar -->
<g fill="#3b4453">
<rect x="6" y="983" width="1224" height="30"/>
<rect x="1236" y="983" width="59" height="30"/><rect x="1298" y="983" width="80" height="30"/>
<rect x="1381" y="983" width="132" height="30"/><rect x="1541" y="983" width="51" height="30"/>
<rect x="1595" y="983" width="132" height="30"/><rect x="1730" y="983" width="50" height="30"/>
<rect x="1781" y="983" width="30" height="30"/><rect x="1814" y="983" width="30" height="30"/>
<rect x="1847" y="983" width="3" height="30"/><rect x="1854" y="983" width="60" height="30"/>
</g>
<rect x="1513" y="984" width="28" height="28" fill="#5a8fc7"/>
<rect x="1596" y="984" width="28" height="28" fill="#5a8fc7"/>
<text x="1241" y="1004" fill="#f4f6f8" textLength="49.300" lengthAdjust="spacingAndGlyphs">MODEL</text>
<g class="s">
<path d="M1303 992H1322M1303 998H1322M1303 1003H1322M1307 988V1007M1313 988V1007M1318 988V1007" stroke-width="1.100"/>
<path d="M1387 988V1006H1406M1387 1000H1393V1006" stroke-width="1.300"/>
<circle cx="1425" cy="998" r="8"/><path d="M1425 998H1436M1425 998L1432 988"/>
<path d="M1476 988V1006" stroke="#49b56a"/><path d="M1469 989L1483 1005" stroke="#c45a5a"/><circle cx="1476" cy="998" r="2" fill="#3b4453"/>
<path d="M1529 990L1519 1000M1518 1005H1537"/>
<rect x="1549" y="990" width="17" height="17" stroke="#e5e7ea"/>
</g>
<rect x="1527" y="997" width="4" height="4" fill="#fff"/>
<rect x="1548" y="988" width="5" height="5" fill="#3b4453" stroke="#e0a37a"/>
<g fill="#d5d8dc">
<rect x="1334" y="990" width="3" height="3"/><rect x="1341" y="990" width="3" height="3"/><rect x="1347" y="990" width="3" height="3"/>
<rect x="1334" y="996" width="3" height="3"/><rect x="1341" y="996" width="3" height="3"/><rect x="1347" y="996" width="3" height="3"/>
<rect x="1334" y="1002" width="3" height="3"/><rect x="1341" y="1002" width="3" height="3"/><rect x="1347" y="1002" width="3" height="3"/>
<use href="#dd" x="1367" y="997"/><use href="#dd" x="1450.600" y="997"/><use href="#dd" x="1500.500" y="997"/><use href="#dd" x="1582" y="997"/><use href="#dd" x="1717" y="997"/><use href="#dd" x="1771" y="997"/>
<path d="M1637 988L1641 998L1646 1008H1640L1637 1004L1634 1008H1628L1633 998Z"/>
<path d="M1670 988L1674 998L1679 1008H1673L1670 1004L1667 1008H1661L1666 998Z"/>
</g>
<path d="M1606 987L1610 997L1615 1008H1609L1606 1004L1603 1008H1597L1602 997Z" fill="#fff"/>
<circle cx="1618" cy="993" r="3.500" fill="none" stroke="#fff" stroke-width="1.300"/>
<path d="M1647 989L1644 993H1648L1645 997" stroke="#d5d8dc" fill="none"/>
<text x="1691" y="1004" style="font-size:14.500px" fill="#f2f4f6" textLength="16" lengthAdjust="spacingAndGlyphs">1:1</text>
<circle cx="1744.500" cy="998" r="7" fill="none" stroke="#d5d8dc" stroke-width="4"/>
<path d="M1744.500 987V1009M1733.500 998H1755.500M1737 990.500L1752 1005.500M1752 990.500L1737 1005.500" stroke="#d5d8dc" stroke-width="3" stroke-dasharray="4 14"/>
<path d="M1785.500 998H1805.500M1795.500 988V1008" stroke="#d5d8dc" stroke-width="2.500"/>
<g fill="none" stroke="#d5d8dc" stroke-width="1.200">
<rect x="1820" y="988" width="7" height="8"/><circle cx="1835" cy="997" r="4.500"/><path d="M1826 1001L1831 1008H1821Z"/>
<rect x="1860" y="990" width="19" height="15"/><path d="M1870 997L1876 992M1876 992H1872M1876 992V995M1868 999L1863 1003M1863 1003H1866M1863 1003V1000"/>
</g>
<g fill="#dfe2e5"><rect x="1889" y="990" width="21" height="2.500"/><rect x="1889" y="997" width="21" height="2.500"/><rect x="1889" y="1004" width="21" height="2.500"/></g>

<!-- DIALOG -->
<rect x="642" y="220" width="636" height="573" rx="9" fill="#14181e" opacity=".35"/>
<rect x="644" y="222" width="632" height="569" rx="8" fill="#f0f0f0"/>
<path d="M644 259V230a8 8 0 0 1 8-8H1268a8 8 0 0 1 8 8V259Z" fill="#eff4f9"/>
<rect x="653.500" y="230" width="18" height="15" rx="2" fill="#e8124f"/><rect x="653.500" y="245" width="18" height="5.500" fill="#7c1233"/>
<text x="658.500" y="243" style="font-size:12.500px;font-weight:bold" fill="#fff">A</text>
<text x="679.600" y="246" style="font-size:15px" fill="#222" textLength="110.600" lengthAdjust="spacingAndGlyphs">Drafting Settings</text>
<path d="M1249.500 234.500L1261 246M1261 234.500L1249.500 246" stroke="#222" stroke-width="1"/>

<rect x="658.500" y="297.500" width="601" height="430" fill="#fbfbfb" stroke="#e2e2e2"/>
<g fill="#f5f5f5" stroke="#e4e4e4">
<rect x="660.500" y="276.500" width="94.500" height="21"/><rect x="755" y="276.500" width="98" height="21"/>
<rect x="937.500" y="276.500" width="104" height="21"/><rect x="1041.500" y="276.500" width="94" height="21"/><rect x="1135.500" y="276.500" width="88" height="21"/>
</g>
<rect x="853" y="273.500" width="84.500" height="24.500" fill="#fbfbfb" stroke="#e4e4e4"/><rect x="853.500" y="296" width="83.500" height="3" fill="#fbfbfb"/>
<rect x="1223.500" y="275.500" width="18" height="18" fill="#f8f8f8" stroke="#e0e0e0"/><rect x="1241.500" y="275.500" width="18" height="18" fill="#f8f8f8" stroke="#e0e0e0"/>
<path d="M1235 281V289L1230 285ZM1249 281V289L1254 285Z" fill="#222"/>
<text x="665.300" y="290" class="k" textLength="85.700" lengthAdjust="spacingAndGlyphs">Snap and Grid</text>
<text x="761.200" y="290" class="k" textLength="87.800" lengthAdjust="spacingAndGlyphs">Polar Tracking</text>
<text x="859.200" y="288" class="k" textLength="73.500" lengthAdjust="spacingAndGlyphs">Object Snap</text>
<text x="943.300" y="290" class="k" textLength="93.400" lengthAdjust="spacingAndGlyphs">3D Object Snap</text>
<text x="1047.300" y="290" class="k" textLength="84.500" lengthAdjust="spacingAndGlyphs">Dynamic Input</text>
<text x="1141.200" y="290" class="k" textLength="81" lengthAdjust="spacingAndGlyphs">Quick Propert</text>

<use href="#on" x="678" y="312"/><use href="#on" x="968" y="312"/>
<text x="697.500" y="325" class="k" textLength="119.200" lengthAdjust="spacingAndGlyphs">Object Snap <tspan class="u">O</tspan>n (F3)</text>
<text x="987.300" y="325" class="k" textLength="182.500" lengthAdjust="spacingAndGlyphs">Object Snap Trac<tspan class="u">k</tspan>ing On (F11)</text>

<rect x="678.500" y="346.500" width="563" height="326" fill="#fbfbfb" stroke="#dcdcdc"/>
<rect x="684" y="342" width="125" height="9" fill="#fbfbfb"/>
<text x="687.800" y="351.500" class="k" textLength="117.500" lengthAdjust="spacingAndGlyphs">Object Snap modes</text>

<use href="#on" x="728" y="370"/><text x="747.300" y="383" class="k" textLength="53.100" lengthAdjust="spacingAndGlyphs"><tspan class="u">E</tspan>ndpoint</text>
<use href="#off" x="730" y="402.500"/><text x="749.400" y="415.500" class="k" textLength="51" lengthAdjust="spacingAndGlyphs"><tspan class="u">M</tspan>idpoint</text>
<rect x="748.500" y="401.500" width="52" height="18.500" fill="none" stroke="#222" stroke-dasharray="1 1"/>
<use href="#off" x="730" y="436"/><text x="749.400" y="449" class="k" textLength="38.400" lengthAdjust="spacingAndGlyphs"><tspan class="u">C</tspan>enter</text>
<use href="#off" x="730" y="470"/><text x="749.400" y="483" class="k" textLength="103.600" lengthAdjust="spacingAndGlyphs"><tspan class="u">G</tspan>eometric Center</text>
<use href="#on" x="730" y="504"/><text x="749.400" y="517" class="k" textLength="33" lengthAdjust="spacingAndGlyphs">No<tspan class="u">d</tspan>e</text>
<use href="#off" x="730" y="540"/><text x="749.400" y="553" class="k" textLength="55.100" lengthAdjust="spacingAndGlyphs"><tspan class="u">Q</tspan>uadrant</text>
<use href="#on" x="730" y="572"/><text x="749.400" y="585" class="k" textLength="67.300" lengthAdjust="spacingAndGlyphs"><tspan class="u">I</tspan>ntersection</text>
<use href="#off" x="968" y="370"/><text x="987.300" y="383" class="k" textLength="57.200" lengthAdjust="spacingAndGlyphs">E<tspan class="u">x</tspan>tension</text>
<use href="#on" x="968" y="402"/><text x="987.300" y="415" class="k" textLength="49.400" lengthAdjust="spacingAndGlyphs">In<tspan class="u">s</tspan>ertion</text>
<use href="#on" x="968" y="436"/><text x="987.300" y="449" class="k" textLength="83.700" lengthAdjust="spacingAndGlyphs"><tspan class="u">P</tspan>erpendicular</text>
<use href="#off" x="968" y="470"/><text x="988" y="483" class="k" textLength="49.600" lengthAdjust="spacingAndGlyphs">Ta<tspan class="u">n</tspan>gent</text>
<use href="#off" x="968" y="504"/><text x="987.300" y="517" class="k" textLength="48.200" lengthAdjust="spacingAndGlyphs">Nea<tspan class="u">r</tspan>est</text>
<use href="#off" x="968" y="540"/><text x="987.300" y="553" class="k" textLength="125.400" lengthAdjust="spacingAndGlyphs"><tspan class="u">A</tspan>pparent intersection</text>
<use href="#off" x="968" y="572"/><text x="987.300" y="585" class="k" textLength="45.700" lengthAdjust="spacingAndGlyphs">Para<tspan class="u">l</tspan>lel</text>

<g class="c">
<rect x="701.500" y="371.500" width="14" height="14"/>
<path d="M708.500 404L716 418H701Z"/>
<circle cx="708.500" cy="445" r="7"/>
<circle cx="708.500" cy="478.500" r="7"/>
<circle cx="708.500" cy="512.500" r="6.500"/><path d="M702 505.500L715 519.500M715 505.500L702 519.500"/><rect x="701.500" y="505.500" width="14" height="14" stroke-dasharray="2.500 3"/>
<path d="M708.500 539L717 547.500L708.500 556L700 547.500Z"/>
<path d="M701 573.500L715.500 588M715.500 573.500L701 588"/>
<path d="M940 377H951M953 377H955" stroke-width="1.600"/>
<path d="M940 403H948V409H954V419H946V411H940Z"/>
<path d="M940.500 436V452H954M946 452V444H940.500"/>
<path d="M940 471.500H954"/><circle cx="947" cy="479" r="6"/>
<path d="M940 505.500H954L940 519.500H954Z"/>
<rect x="939.500" y="539.500" width="14" height="14" stroke-width="1.400"/><path d="M939.500 539.500L953.500 553.500M953.500 539.500L939.500 553.500"/>
<path d="M939 584L950 573M944 587L955 576"/>
</g>

<path d="M720 620a12 12 0 0 1 12 12c0 5-3 8-6 10h-12c-3-2-6-5-6-10a12 12 0 0 1 12-12Z" fill="#f5a800"/>
<rect x="718.500" y="625" width="3" height="10" rx="1.500" fill="#fff"/><circle cx="720" cy="638" r="1.800" fill="#fff"/>
<path d="M715 645H725V653L722 655H718L715 653Z" fill="#6b6b6b"/>
<text x="757" y="627" class="k" textLength="434.800" lengthAdjust="spacingAndGlyphs">To track from an Osnap point, pause over the point while in a command.  A</text>
<text x="756.300" y="643.500" class="k" textLength="405.300" lengthAdjust="spacingAndGlyphs">tracking vector appears when you move the cursor.  To stop tracking,</text>
<text x="756.300" y="659.500" class="k" textLength="160.400" lengthAdjust="spacingAndGlyphs">pause over the point again.</text>

<g fill="#fdfdfd" stroke="#d8d8d8">
<rect x="1131.500" y="363.500" width="97" height="25" rx="4"/>
<rect x="1131.500" y="399.500" width="97" height="25" rx="4"/>
<rect x="659.500" y="750.500" width="96.500" height="25" rx="4"/>
<rect x="1057.500" y="750.500" width="97" height="25" rx="4"/>
<rect x="1163.500" y="750.500" width="96.500" height="25" rx="4"/>
</g>
<rect x="951.500" y="750.500" width="97" height="25" rx="4" fill="#fdfdfd" stroke="#0f6cbd" stroke-width="1.200"/>
<text x="1152.200" y="381" class="k" textLength="55.800" lengthAdjust="spacingAndGlyphs">Select All</text>
<text x="1155" y="417" class="k" textLength="50" lengthAdjust="spacingAndGlyphs">Clear All</text>
<text x="680" y="768" class="k" textLength="54.700" lengthAdjust="spacingAndGlyphs">Op<tspan class="u">t</tspan>ions...</text>
<text x="991.400" y="768" class="k" textLength="18" lengthAdjust="spacingAndGlyphs">OK</text>
<text x="1085" y="768" class="k" textLength="42" lengthAdjust="spacingAndGlyphs">Cancel</text>
<text x="1197" y="768" class="k" textLength="28.700" lengthAdjust="spacingAndGlyphs"><tspan class="u">H</tspan>elp</text>
</svg>
</body></html>
